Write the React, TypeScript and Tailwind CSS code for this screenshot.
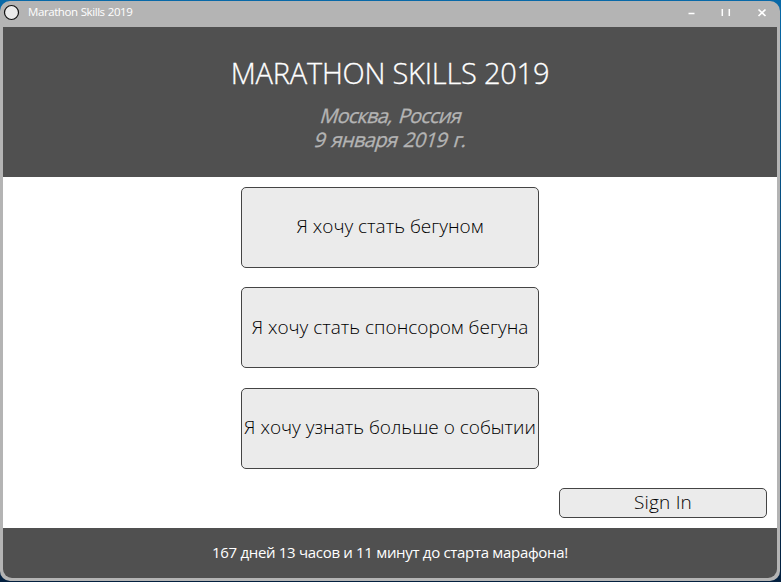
const choices = [
  'Я хочу стать бегуном',
  'Я хочу стать спонсором бегуна',
  'Я хочу узнать больше о событии',
];

function TitleBar() {
  return (
    <div className="flex h-[26px] shrink-0 items-start text-white">
      <svg className="ml-[3px] mt-[3px] shrink-0" width="17" height="17" viewBox="0 0 17 17">
        <circle cx="8.5" cy="8.5" r="7" fill="#ebebeb" stroke="#111" strokeWidth="1.2" />
      </svg>
      <span className="ml-2 mt-[3px] whitespace-nowrap text-[11.5px] leading-4 tracking-[-0.42px] [word-spacing:0.5px]">Marathon Skills 2019</span>
      <svg className="ml-auto mr-[12px] mt-[6px]" width="82" height="12" viewBox="0 0 82 12" stroke="#fff" fill="none">
        <path d="M2.500 6.500h6M36.300 2v7M43.300 2v7" strokeWidth="1.5" />
        <path d="M72.500 2.500l7 6.500M79.500 2.500l-7 6.500" strokeWidth="1.7" />
      </svg>
    </div>
  );
}

export default function App() {
  return (
    <div className="h-[582px] w-[781px] bg-linear-to-b from-[#0869a8] to-[#03203f] pr-px pt-px pb-px font-['Open_Sans','Noto_Sans',sans-serif]">
      <div className="flex h-[580px] w-[780px] flex-col overflow-hidden rounded-[10px] bg-[#b4b4b4]">
        <TitleBar />
        <div className="mx-[3px] flex min-h-0 flex-1 flex-col overflow-hidden rounded-b-[9px] bg-[#505050]">
          <header className="flex h-[150px] shrink-0 flex-col items-center pt-[26px]">
            <h1 className="whitespace-nowrap text-[29px] font-light leading-10 tracking-[-0.23px] text-white [-webkit-text-stroke:0.3px_white]">MARATHON SKILLS 2019</h1>
            <div className="mt-[11px] flex flex-col items-center whitespace-nowrap pl-[2px] text-[20px] leading-6 text-[#b4b4b4] [-webkit-text-stroke:0.3px_#b4b4b4]">
              <span className="-skew-x-[16deg] tracking-[-0.8px] [word-spacing:2px]">Москва, Россия</span>
              <span className="-skew-x-[16deg] tracking-[-0.65px] [word-spacing:2px]">9 января 2019 г.</span>
            </div>
          </header>
          <main className="flex h-[351px] shrink-0 flex-col items-center bg-white pt-[10px]">
            <div className="flex flex-col gap-[19.4px]">
              {choices.map((label) => (
                <button
                  key={label}
                  className="flex h-[81px] w-[298px] items-center justify-center whitespace-nowrap rounded-[5px] border border-[#444] bg-[#ebebeb] pb-[2px] text-[19px] font-light text-black"
                >
                  <span>{label}</span>
                </button>
              ))}
            </div>
            <button className="mr-[10px] mt-[19.4px] flex h-[30px] w-[208px] items-center justify-center self-end rounded-[5px] border border-[#444] bg-[#ebebeb] pb-[2px] text-[19px] font-light text-black">
              <span className="tracking-[0.2px]">Sign In</span>
            </button>
          </main>
          <footer className="flex h-[50px] shrink-0 items-center justify-center whitespace-nowrap pb-[2px] text-[15px] text-white">
            <span className="tracking-[-0.31px]">167 дней 13 часов и 11 минут до старта марафона!</span>
          </footer>
        </div>
        <div className="h-[3px] shrink-0" />
      </div>
    </div>
  );
}
